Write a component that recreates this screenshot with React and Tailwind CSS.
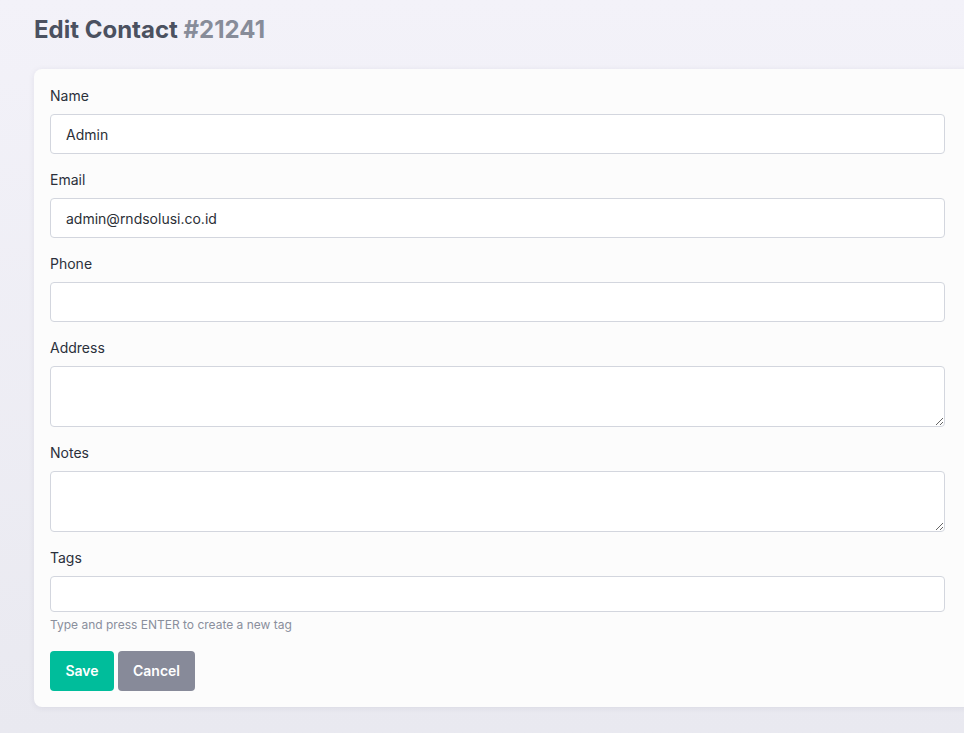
import React from "react";

const font = { fontFamily: "Inter, 'Noto Sans', sans-serif" };

function Field({ label, children }) {
  return (
    <div className="mb-4">
      <label className="block text-sm leading-5 text-[#2b303b] mb-2">{label}</label>
      {children}
    </div>
  );
}

export default function App() {
  const inputCls =
    "block w-full h-10 rounded-[4px] border border-[#d3d6de] bg-white px-[15px] text-sm text-[#2b2f36] outline-none";
  const areaCls =
    "block w-full h-[61px] rounded-[4px] border border-[#d3d6de] bg-white px-[15px] py-2 text-sm text-[#2b2f36] outline-none";

  return (
    <div
      className="min-h-screen overflow-hidden bg-gradient-to-b from-[#f3f2f9] to-[#e9e9f0] pl-[34px] pt-[14px] pb-[27px]"
      style={font}
    >
      <h1 className="text-2xl leading-8 font-bold text-[#4b5160] mb-[23px]">
        Edit Contact <span className="text-[#878c99]">#21241</span>
      </h1>

      <div className="w-[950px] rounded-lg bg-[#fcfcfc] shadow-[0_1px_6px_rgba(40,40,80,0.08)] pl-4 pr-[19px] pt-[17px] pb-4">
        <form className="w-[895px]">
          <Field label="Name">
            <input className={inputCls} defaultValue="Admin" />
          </Field>
          <Field label="Email">
            <input className={inputCls} defaultValue="admin@rndsolusi.co.id" />
          </Field>
          <Field label="Phone">
            <input className={inputCls} defaultValue="" />
          </Field>
          <Field label="Address">
            <textarea className={areaCls} defaultValue="" />
          </Field>
          <Field label="Notes">
            <textarea className={areaCls} defaultValue="" />
          </Field>
          <div className="mb-[18px]">
            <label className="block text-sm leading-5 text-[#2b303b] mb-2">Tags</label>
            <input className="block w-full h-9 rounded-[4px] border border-[#d3d6de] bg-white px-[15px] text-sm text-[#2b2f36] outline-none" />
            <p className="mt-[5px] text-xs leading-4 text-[#8a8f9c]">
              Type and press ENTER to create a new tag
            </p>
          </div>
          <div className="flex gap-1">
            <button
              type="button"
              className="h-10 w-16 rounded-[4px] bg-[#00bd9b] text-sm font-semibold text-white"
            >
              Save
            </button>
            <button
              type="button"
              className="h-10 w-[77px] rounded-[4px] bg-[#878a99] text-sm font-semibold text-white"
            >
              Cancel
            </button>
          </div>
        </form>
      </div>
    </div>
  );
}
